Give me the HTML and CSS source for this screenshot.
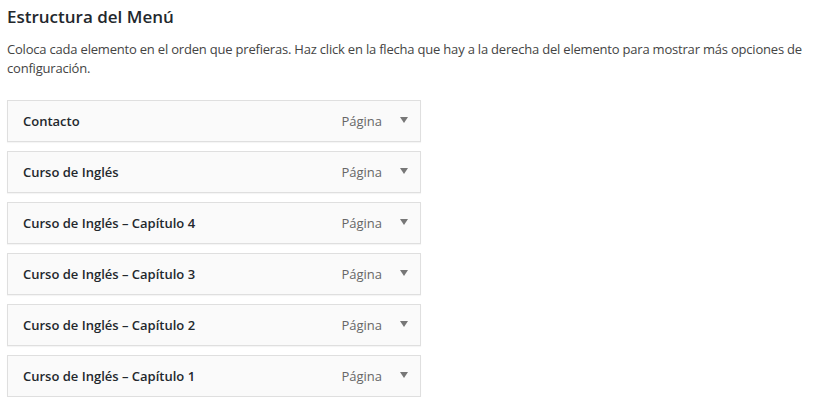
FILE: index.html
```html
<!DOCTYPE html>
<html lang="es">
<head>
    <meta charset="UTF-8">
    <title>Estructura del Menú</title>
    <link rel="stylesheet" href="styles.css">
</head>
<body>
    <div class="menu-settings">
        <h3>Estructura del Menú</h3>
        <p class="menu-help">Coloca cada elemento en el orden que prefieras. Haz click en la flecha que hay a la derecha del elemento para mostrar más opciones de configuración.</p>

        <ul class="menu-items">
            <li class="menu-item">
                <span class="item-title">Contacto</span>
                <span class="item-type">Página</span>
                <span class="item-arrow"></span>
            </li>
            <li class="menu-item">
                <span class="item-title">Curso de Inglés</span>
                <span class="item-type">Página</span>
                <span class="item-arrow"></span>
            </li>
            <li class="menu-item">
                <span class="item-title">Curso de Inglés – Capítulo 4</span>
                <span class="item-type">Página</span>
                <span class="item-arrow"></span>
            </li>
            <li class="menu-item">
                <span class="item-title">Curso de Inglés – Capítulo 3</span>
                <span class="item-type">Página</span>
                <span class="item-arrow"></span>
            </li>
            <li class="menu-item">
                <span class="item-title">Curso de Inglés – Capítulo 2</span>
                <span class="item-type">Página</span>
                <span class="item-arrow"></span>
            </li>
            <li class="menu-item">
                <span class="item-title">Curso de Inglés – Capítulo 1</span>
                <span class="item-type">Página</span>
                <span class="item-arrow"></span>
            </li>
        </ul>
    </div>
</body>
</html>
```

FILE: styles.css
```css
body {
    font-family: "Open Sans", sans-serif;
    font-size: 13px;
    line-height: 1.4;
    color: #444;
    margin: 0;
    padding: 0 0 0 7px;
    background-color: #fff;
}
h3 {
    font-size: 17px;
    font-weight: 600;
    color: #23282d;
    margin: 5px 0 0;
    line-height: 24px;
}
.menu-help {
    margin: 11px 0 0;
    line-height: 19px;
    letter-spacing: -0.2px;
}
.menu-items {
    list-style: none;
    margin: 22px 0 0;
    padding: 0;
    display: flex;
    flex-direction: column;
    gap: 9px;
}
.menu-item {
    display: flex;
    align-items: center;
    padding: 0 12px 0 15px;
    box-sizing: border-box;
    width: 414px;
    height: 42px;
    border: 1px solid #dfdfdf;
    background: #fafafa;
    box-shadow: 0 1px 1px rgba(0,0,0,0.04);
}
.item-title {
    flex: 1;
    font-weight: 600;
    color: #23282d;
}
.item-type {
    color: #666;
    margin-right: 18px;
}
.item-arrow {
    width: 0;
    height: 0;
    border-left: 4px solid transparent;
    border-right: 4px solid transparent;
    border-top: 6px solid #777;
    margin-top: -2px;
}
```
